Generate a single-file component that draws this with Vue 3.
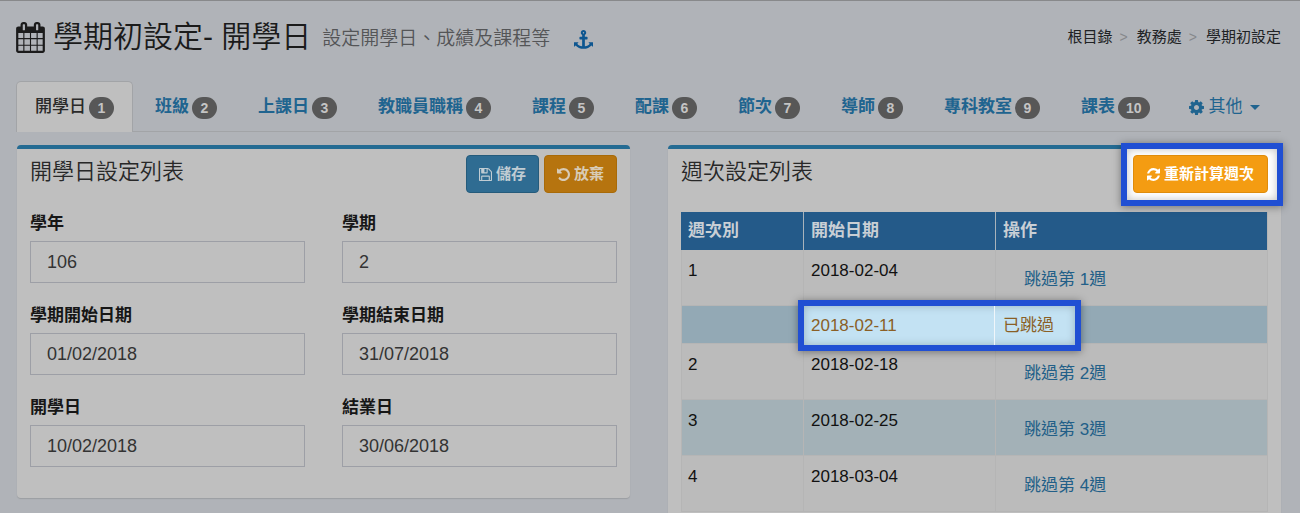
<script setup>
import { ref } from 'vue'

const icons = {
  calendar:
    'M192 1664h288v-288h-288v288zm352 0h320v-288h-320v288zm-352-352h288v-320h-288v320zm352 0h320v-320h-320v320zm-352-384h288v-288h-288v288zm736 736h320v-288h-320v288zm-384-736h320v-288h-320v288zm768 736h288v-288h-288v288zm-384-352h320v-320h-320v320zm-352-864v-288q0-13-9.5-22.5t-22.5-9.5h-64q-13 0-22.5 9.5t-9.5 22.5v288q0 13 9.5 22.5t22.5 9.5h64q13 0 22.5-9.5t9.5-22.5zm736 864h288v-320h-288v320zm-384-384h320v-288h-320v288zm384 0h288v-288h-288v288zm32-480v-288q0-13-9.5-22.5t-22.5-9.5h-64q-13 0-22.5 9.5t-9.5 22.5v288q0 13 9.5 22.5t22.5 9.5h64q13 0 22.5-9.5t9.5-22.5zm384-64v1280q0 52-38 90t-90 38h-1408q-52 0-90-38t-38-90v-1280q0-52 38-90t90-38h128v-96q0-66 47-113t113-47h64q66 0 113 47t47 113v96h384v-96q0-66 47-113t113-47h64q66 0 113 47t47 113v96h128q52 0 90 38t38 90z',
  anchor:
    'M960 256q0-26-19-45t-45-19-45 19-19 45 19 45 45 19 45-19 19-45zm832 928v352q0 22-20 30-8 2-12 2-12 0-23-9l-93-93q-119 143-318.5 226.5t-429.5 83.5-429.5-83.5-318.5-226.5l-93 93q-9 9-23 9-4 0-12-2-20-8-20-30v-352q0-14 9-23t23-9h352q22 0 30 20 8 19-7 35l-100 100q67 91 189.5 153.5t271.5 82.5v-647h-192q-26 0-45-19t-19-45v-128q0-26 19-45t45-19h192v-163q-58-34-93-92.5t-35-128.5q0-106 75-181t181-75 181 75 75 181q0 70-35 128.5t-93 92.5v163h192q26 0 45 19t19 45v128q0 26-19 45t-45 19h-192v647q149-20 271.5-82.5t189.5-153.5l-100-100q-15-16-7-35 8-20 30-20h352q14 0 23 9t9 23z',
  cog: 'M1152 896q0-106-75-181t-181-75-181 75-75 181 75 181 181 75 181-75 75-181zm512-109v222q0 12-8 23t-20 13l-185 28q-19 54-39 91 35 50 107 138 10 12 10 25t-9 23q-27 37-99 108t-94 71q-12 0-26-9l-138-108q-44 23-91 38-16 136-29 186-7 28-36 28h-222q-14 0-24.5-8.5t-11.5-21.5l-28-184q-49-16-90-37l-141 107q-10 9-25 9-14 0-25-11-126-114-165-168-7-10-7-23 0-12 8-23 15-21 51-66.5t54-70.5q-27-50-41-99l-183-27q-13-2-21-12.5t-8-23.5v-222q0-12 8-23t19-13l186-28q14-46 39-92-40-57-107-138-10-12-10-24 0-10 9-23 26-36 98.5-107.5t94.5-71.5q13 0 26 10l138 107q44-23 91-38 16-136 29-186 7-28 36-28h222q14 0 24.5 8.5t11.5 21.5l28 184q49 16 90 37l142-107q9-9 24-9 13 0 25 10 129 119 165 170 7 8 7 22 0 12-8 23-15 21-51 66.5t-54 70.5q26 50 41 98l183 28q13 2 21 12.5t8 23.5z',
  save: 'M512 1536h768v-384h-768v384zm896 0h128v-896q0-14-10-38.5t-20-34.5l-281-281q-10-10-34-20t-39-10v416q0 40-28 68t-68 28h-576q-40 0-68-28t-28-68v-416h-128v1280h128v-416q0-40 28-68t68-28h832q40 0 68 28t28 68v416zm-384-928v-320q0-13-9.5-22.5t-22.5-9.5h-192q-13 0-22.5 9.5t-9.5 22.5v320q0 13 9.5 22.5t22.5 9.5h192q13 0 22.5-9.5t9.5-22.5zm640 32v928q0 40-28 68t-68 28h-1344q-40 0-68-28t-28-68v-1344q0-40 28-68t68-28h928q40 0 88 20t76 48l280 280q28 28 48 76t20 88z',
  undo: 'M1664 896q0 156-61 298t-164 245-245 164-298 61q-172 0-327-72.5t-264-204.5q-7-10-6.5-22.5t8.5-20.5l137-138q10-9 25-9 16 2 23 12 73 95 179 147t225 52q104 0 198.5-40.5t163.5-109.5 109.5-163.5 40.5-198.5-40.5-198.5-109.5-163.5-163.5-109.5-198.5-40.5q-98 0-188 35.5t-160 101.5l137 138q31 30 14 69-17 40-59 40h-448q-26 0-45-19t-19-45v-448q0-42 40-59 39-17 69 14l130 129q107-101 244.5-156.5t284.5-55.5q156 0 298 61t245 164 164 245 61 298z',
  refresh:
    'M1639 1056q0 5-1 7-64 268-268 434.5t-478 166.5q-146 0-282.5-55t-243.5-157l-129 129q-19 19-45 19t-45-19-19-45v-448q0-26 19-45t45-19h448q26 0 45 19t19 45-19 45l-137 137q71 66 161 102t187 36q134 0 250-65t186-179q11-17 53-117 8-23 30-23h192q13 0 22.5 9.5t9.5 22.5zm25-800v448q0 26-19 45t-45 19h-448q-26 0-45-19t-19-45 19-45l138-138q-148-137-349-137-134 0-250 65t-186 179q-11 17-53 117-8 23-30 23h-199q-13 0-22.5-9.5t-9.5-22.5v-7q65-268 270-434.5t480-166.5q146 0 284 55.5t245 156.5l130-129q19-19 45-19t45 19 19 45z',
}

const tabs = ['開學日', '班級', '上課日', '教職員職稱', '課程', '配課', '節次', '導師', '專科教室', '課表']
const active = ref(0)

const fields = ref([
  { id: 'year', label: '學年', value: '106' },
  { id: 'term', label: '學期', value: '2' },
  { id: 'term-start', label: '學期開始日期', value: '01/02/2018' },
  { id: 'term-end', label: '學期結束日期', value: '31/07/2018' },
  { id: 'open-day', label: '開學日', value: '10/02/2018' },
  { id: 'close-day', label: '結業日', value: '30/06/2018' },
])

const weeks = [
  { no: 1, date: '2018-02-04' },
  { skipped: true, date: '2018-02-11' },
  { no: 2, date: '2018-02-18' },
  { no: 3, date: '2018-02-25', shaded: true },
  { no: 4, date: '2018-03-04' },
]
</script>

<template>
  <div class="page">
    <header class="top">
      <svg class="icon-cal" viewBox="64 0 1664 1792" aria-hidden="true"><path :d="icons.calendar" /></svg>
      <h1>學期初設定- 開學日</h1>
      <small>設定開學日、成績及課程等</small>
      <a class="anchor" href="#" aria-label="連結"><svg viewBox="0 0 1792 1792"><path :d="icons.anchor" /></svg></a>
      <nav class="crumbs">
        <a href="#">根目錄</a><span>&gt;</span><a href="#">教務處</a><span>&gt;</span><a href="#">學期初設定</a>
      </nav>
    </header>

    <nav class="tabs">
      <button
        v-for="(t, i) in tabs"
        :key="t"
        type="button"
        class="tab"
        :class="{ active: i === active }"
        @click="active = i"
      >
        {{ t }}<span class="badge">{{ i + 1 }}</span>
      </button>
      <button type="button" class="tab more">
        <svg viewBox="128 128 1536 1536" aria-hidden="true"><path :d="icons.cog" /></svg>其他<i class="caret"></i>
      </button>
    </nav>

    <main class="panels">
      <section class="panel">
        <div class="head">
          <h2>開學日設定列表</h2>
          <div class="actions">
            <button type="button" class="btn save">
              <svg viewBox="128 128 1536 1536" aria-hidden="true"><path :d="icons.save" /></svg>儲存
            </button>
            <button type="button" class="btn drop">
              <svg viewBox="128 128 1536 1536" aria-hidden="true"><path :d="icons.undo" /></svg>放棄
            </button>
          </div>
        </div>
        <form class="form" @submit.prevent>
          <div v-for="f in fields" :key="f.id" class="field">
            <label :for="f.id">{{ f.label }}</label>
            <input :id="f.id" v-model="f.value" type="text" />
          </div>
        </form>
      </section>

      <section class="panel">
        <div class="head">
          <h2>週次設定列表</h2>
          <div class="spot">
            <span class="ring ring-btn"></span>
            <button type="button" class="btn recalc">
              <svg viewBox="128 128 1536 1536" aria-hidden="true"><path :d="icons.refresh" /></svg>重新計算週次
            </button>
          </div>
        </div>
        <table>
          <colgroup>
            <col class="c1" />
            <col class="c2" />
            <col />
          </colgroup>
          <thead>
            <tr>
              <th scope="col">週次別</th>
              <th scope="col">開始日期</th>
              <th scope="col">操作</th>
            </tr>
          </thead>
          <tbody>
            <tr v-for="w in weeks" :key="w.date" :class="{ skipped: w.skipped, shaded: w.shaded }">
              <td>{{ w.no }}</td>
              <td>
                <span v-if="w.skipped" class="ring ring-row"></span>
                <span class="txt">{{ w.date }}</span>
              </td>
              <td>
                <span v-if="w.skipped" class="txt">已跳過</span>
                <a v-else class="skip" href="#">跳過第 {{ w.no }}週</a>
              </td>
            </tr>
          </tbody>
        </table>
      </section>
    </main>
  </div>
</template>

<style>
body {
  margin: 0;
  background: #b0b3b8;
}
</style>

<style scoped>
* {
  box-sizing: border-box;
}
.page {
  height: 100vh;
  overflow: hidden;
  padding: 0 19px 0 16px;
  border-top: 1px solid #88898b;
  background: #b0b3b8;
  color: #1b1b1b;
  font-family: "Liberation Sans", "Noto Sans CJK TC", sans-serif;
  font-size: 17px;
  line-height: 24px;
}
svg {
  display: block;
  fill: currentColor;
}
a {
  color: #1b5f8c;
  text-decoration: none;
}
button,
input {
  font: inherit;
  margin: 0;
}
h1,
h2 {
  margin: 0;
  font-weight: 350;
}
.top {
  display: flex;
  align-items: center;
  height: 72px;
  white-space: nowrap;
}
.icon-cal {
  width: 29px;
  height: 31px;
  margin-right: 8px;
}
h1 {
  font-size: 30px;
  line-height: 40px;
}
.top small {
  margin: 4px 0 0 11px;
  color: #545557;
  font-size: 19px;
  font-weight: 350;
}
.anchor {
  margin: 4px 0 0 24px;
  color: #0d5690;
}
.anchor svg {
  width: 19px;
  height: 19px;
}
.crumbs {
  display: flex;
  margin-left: auto;
  font-size: 15px;
}
.crumbs a {
  color: #202224;
}
.crumbs span {
  margin: 0 9px 0 7px;
  color: #86888b;
  font-size: 14px;
}
.tabs {
  display: flex;
  gap: 3px;
  margin-top: 8px;
  border-bottom: 1px solid #a2a4a7;
}
.tab {
  display: flex;
  align-items: center;
  gap: 3px;
  height: 51px;
  margin-bottom: -1px;
  padding: 0 18px;
  border: 1px solid transparent;
  border-bottom: 0;
  border-radius: 5px 5px 0 0;
  background: none;
  color: #20648f;
  font-weight: 700;
  white-space: nowrap;
}
.tab.active {
  border-color: #a2a4a7;
  background: #bfbfbf;
  color: #2a2a2a;
  font-weight: 500;
}
.badge {
  min-width: 25px;
  margin-top: 2px;
  padding: 0 8px;
  border-radius: 11px;
  background: #575757;
  color: #c4c4c4;
  font-size: 14px;
  font-weight: 700;
  line-height: 22px;
}
.tab.more {
  padding-left: 16px;
  font-weight: 400;
}
.more svg {
  width: 15px;
  height: 15px;
  margin-right: 2px;
}
.caret {
  margin-left: 4px;
  border: 5px solid transparent;
  border-top-color: currentColor;
  border-bottom: 0;
}
.panels {
  display: grid;
  grid-template-columns: 1fr 1fr;
  gap: 38px;
  align-items: start;
  margin: 13px 0 0 1px;
}
.panel {
  padding: 0 13px 31px;
  border-top: 4px solid #246b93;
  border-radius: 4px;
  background: #bfbfbf;
  box-shadow: 0 1px 1px rgba(0, 0, 0, 0.12);
}
.head {
  display: flex;
  justify-content: space-between;
  align-items: flex-start;
  padding-top: 6px;
}
h2 {
  color: #282828;
  font-size: 22px;
  line-height: 34px;
}
.actions {
  display: flex;
  gap: 5px;
}
.btn {
  display: flex;
  align-items: center;
  justify-content: center;
  gap: 4px;
  height: 38px;
  padding: 0 12px;
  border: 1px solid;
  border-radius: 4px;
  font-size: 15px;
  font-weight: 700;
  white-space: nowrap;
}
.btn svg {
  width: 13px;
  height: 13px;
}
.save {
  border-color: #255b7b;
  background: #2f6c92;
  color: #c0ccd3;
}
.drop {
  border-color: #a86a08;
  background: #b6740f;
  color: #d8cbb6;
}
.recalc {
  position: relative;
  padding: 0 13px;
  border-color: #df8c0b;
  background: #f49c12;
  color: #fff;
}
.form {
  display: grid;
  grid-template-columns: 1fr 1fr;
  gap: 20px 37px;
  margin-top: 18px;
}
.field {
  min-width: 0;
}
.field label {
  display: block;
  height: 30px;
  line-height: 26px;
  color: #161616;
  font-weight: 700;
}
.field input {
  display: block;
  width: 100%;
  height: 42px;
  padding: 0 16px;
  border: 1px solid #9d9fa6;
  border-radius: 0;
  outline: 0;
  background: transparent;
  color: #333;
  font-size: 18px;
}
.spot,
.txt {
  position: relative;
}
.ring {
  position: absolute;
  border: 6px solid #204fd3;
}
.ring-btn {
  inset: -12px -15px -13px -12px;
  background: #fff;
  box-shadow: 0 1px 8px rgba(0, 0, 0, 0.4), inset 0 0 8px rgba(0, 0, 0, 0.25);
}
.ring-row {
  top: -6px;
  bottom: -8px;
  left: -6px;
  width: calc(100% + 92px);
  background: #c3e2f3;
  box-shadow: 0 1px 8px rgba(0, 0, 0, 0.4), inset 0 0 9px rgba(0, 0, 0, 0.22);
}
/* divider between the two highlighted cells */
.ring-row::after {
  content: "";
  position: absolute;
  top: 0;
  right: 80px;
  bottom: 0;
  width: 1px;
  background: #f0f6fa;
}
table {
  width: 100%;
  margin-top: 19px;
  table-layout: fixed;
  border-collapse: separate;
  border-spacing: 0;
  border-right: 1px solid #b5b5b5;
}
.c1 {
  width: 123px;
}
.c2 {
  width: 192px;
}
th {
  height: 38px;
  padding: 0 7px;
  border-right: 1px solid #a9b3bb;
  background: #245a89;
  color: #c9cfd5;
  font-weight: 700;
  text-align: left;
}
td {
  position: relative;
  height: 56px;
  padding: 9px 7px;
  border-right: 1px solid #b5b5b5;
  border-bottom: 1px solid #b5b5b5;
  background: #bbb;
  color: #111;
  vertical-align: top;
}
th:last-child,
td:last-child {
  border-right: 0;
}
td:first-child {
  border-left: 1px solid #b5b5b5;
  padding-left: 6px;
}
.shaded td {
  background: #a3b1b7;
}
.skipped td {
  height: 38px;
  padding-top: 8px;
  padding-bottom: 5px;
  background: #93a9b5;
  color: #8a5f26;
}
.skipped td:nth-child(2) {
  z-index: 1;
}
.skipped td:last-child .txt {
  z-index: 2;
}
.skipped td:last-child {
  position: static;
}
.skip {
  display: block;
  padding: 9px 0 0 21px;
  color: #225f88;
}
td:has(.skip) {
  padding-bottom: 0;
}
</style>
